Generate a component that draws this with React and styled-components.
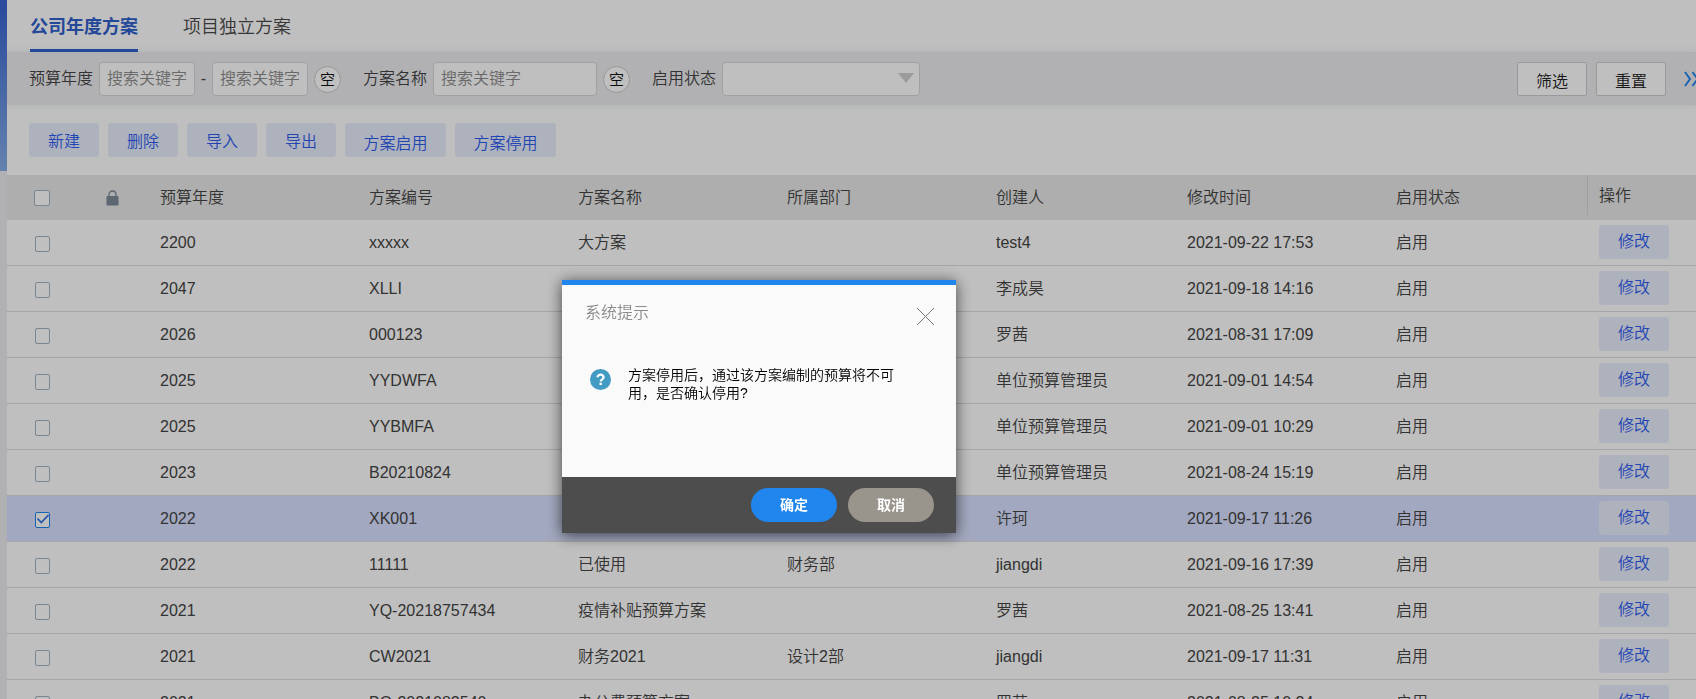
import React, { useState } from "react";
import styled, { createGlobalStyle } from 'styled-components';

const GlobalStyle = createGlobalStyle`
  * {
    box-sizing: border-box;
  }
  body {
    margin: 0;
    font-family: "Liberation Sans", "Noto Sans CJK SC", sans-serif;
    font-size: 16px;
    font-weight: 350;
    color: #444;
    background: #fff;
  }
  button, input, select {
    font: inherit;
    margin: 0;
  }
`;

const Page = styled.div`
  display: flex;
  height: 100vh;
  overflow: hidden;
`

const SideStrip = styled.div`
  flex: none;
  width: 7px;
  background: #ededf1;
  &::before {
    content: '';
    display: block;
    height: 171px;
    background: linear-gradient(#3663d1, #86aee8);
  }
`

const Main = styled.main`
  flex: 1;
  min-width: 0;
  overflow: hidden;
`

const Tabs = styled.nav`
  display: flex;
  gap: 45px;
  height: 52px;
  padding: 0 23px;
`

const Tab = styled.a`
  height: 52px;
  line-height: 54px;
  font-size: 18px;
  text-decoration: none;
  font-weight: ${(props) => (props.$active ? 'bold' : '350')};
  color: ${(props) => (props.$active ? '#3060cc' : '#4a4a4a')};
  border-bottom: 3px solid ${(props) => (props.$active ? '#3060cc' : 'transparent')};
`

const FilterBar = styled.form`
  display: flex;
  align-items: center;
  height: 53px;
  padding-left: 22px;
  background: #ededf1;
  box-shadow: 0 0 8px rgba(60, 90, 130, 0.12);
`

const FilterLabel = styled.label`
  flex: none;
  line-height: 34px;
  margin-right: 6px;
`

const TextInput = styled.input`
  flex: none;
  width: ${(props) => props.$width}px;
  height: 34px;
  padding: 0 7px;
  border: 1px solid #d7d7da;
  border-radius: 4px;
  background: #fff;
  &::placeholder {
    color: #8c8c8c;
    opacity: 1;
  }
`

const Dash = styled.span`
  flex: none;
  width: 17px;
  text-align: center;
`

const EmptyButton = styled.button`
  flex: none;
  width: 27px;
  height: 27px;
  margin: 2px 22px 0 6px;
  padding: 0;
  border: 1px solid #c8c8cc;
  border-radius: 50%;
  background: #fff;
  color: #111;
  font-size: 15px;
  line-height: 23px;
`

const SelectWrap = styled.div`
  position: relative;
  flex: none;
  width: 198px;
  height: 34px;
`

const Select = styled.select`
  width: 100%;
  height: 100%;
  padding: 0 24px 0 7px;
  border: 1px solid #d7d7da;
  border-radius: 4px;
  background: #fff;
  appearance: none;
`

const Caret = styled.svg`
  position: absolute;
  right: 6px;
  top: 11px;
  pointer-events: none;
`

const FilterActions = styled.div`
  display: flex;
  align-items: center;
  flex: none;
  gap: 9px;
  margin-left: auto;
`

const FilterButton = styled.button`
  width: 70px;
  height: 34px;
  padding: 2px 0 0;
  border: 1px solid #ccc;
  border-radius: 2px;
  background: #fff;
  color: #222;
`

const MoreButton = styled.button`
  display: flex;
  width: 16px;
  height: 16px;
  margin: 0 -4px 0 9px;
  padding: 0;
  border: 0;
  background: none;
`

const Toolbar = styled.div`
  display: flex;
  gap: 9px;
  padding: 18px 22px;
`

const ActionButton = styled.button`
  display: block;
  width: ${(props) => (props.$wide ? 101 : 70)}px;
  height: 34px;
  padding: ${(props) => (props.$wide ? '3px 0 0' : '0')};
  border: 0;
  border-radius: 3px;
  background: #e9eefd;
  color: #2f5df0;
`

const Table = styled.table`
  width: 100%;
  table-layout: fixed;
  border-collapse: separate;
  border-spacing: 0;
`

const HeadRow = styled.tr`
  height: 45px;
  background: #e8e8e8;
`

const HeadCell = styled.th`
  padding: ${(props) => (props.$icon ? '0' : '0 12px')};
  text-align: ${(props) => (props.$icon ? 'center' : 'left')};
  vertical-align: ${(props) => (props.$top ? 'top' : 'middle')};
  font-weight: 350;
  line-height: 24px;
  svg {
    display: block;
    margin: 0 auto;
  }
`

const OperateTitle = styled.div`
  height: 40px;
  margin: 0 -12px;
  padding-left: 11px;
  border-left: 1px solid #d4d4d4;
  line-height: 42px;
`

const Row = styled.tr`
  height: 46px;
  background: ${(props) => (props.$checked ? '#d9e1ff' : '#fff')};
`

const Cell = styled.td`
  padding: 0 12px;
  border-bottom: 1px solid #dcdcdc;
  line-height: 24px;
  white-space: nowrap;
`

const CheckCell = styled(Cell)`
  padding: 3px 0 0;
  text-align: center;
`

const OperateCell = styled(Cell)`
  padding-bottom: 1px;
`

const Checkbox = styled.input`
  display: block;
  width: ${(props) => (props.$head ? 16 : 15)}px;
  height: 16px;
  margin: 0 auto;
  appearance: none;
  border: 1px solid #a3b4c4;
  border-radius: 2px;
  background: #fff;
  &:checked {
    border-color: #2085ec;
    background: #fff url("data:image/svg+xml,%3Csvg xmlns='http://www.w3.org/2000/svg' viewBox='0 0 13 14'%3E%3Cpath d='M1.5 5.5L5.3 9.5L12.5 2' fill='none' stroke='%232f74e6' stroke-width='1.8'/%3E%3C/svg%3E") center / 100% 100%;
  }
`

const Mask = styled.div`
  position: fixed;
  inset: 0;
  background: rgba(0, 0, 0, 0.25);
`

const Dialog = styled.section`
  position: fixed;
  left: 562px;
  top: 280px;
  width: 394px;
  border-top: 5px solid #2085ec;
  background: #fafafa;
  box-shadow: 0 2px 14px rgba(0, 0, 0, 0.65);
`

const DialogHead = styled.header`
  display: flex;
  justify-content: space-between;
  padding: 16px 22px 0 23px;
`

const DialogTitle = styled.h2`
  margin: 0;
  font-size: 16px;
  font-weight: 350;
  line-height: 24px;
  color: #8c8c8c;
`

const CloseButton = styled.button`
  display: flex;
  padding: 7px 0 0;
  border: 0;
  background: none;
`

const DialogBody = styled.div`
  display: flex;
  gap: 17px;
  height: 152px;
  padding: 41px 60px 0 28px;
`

const HelpIcon = styled.svg`
  flex: none;
  margin-top: 3px;
`

const Message = styled.p`
  margin: 0;
  font-size: 14px;
  line-height: 18px;
  color: #000;
`

const DialogFoot = styled.footer`
  display: flex;
  justify-content: flex-end;
  gap: 11px;
  padding: 11px 22px;
  background: #4d4d4d;
`

const PillButton = styled.button`
  width: 86px;
  height: 34px;
  padding: 0 0 2px;
  border: 0;
  border-radius: 17px;
  background: ${(props) => (props.$primary ? '#2085ec' : '#99948c')};
  color: #fff;
  font-size: 14px;
  font-weight: bold;
`

const actions = ['新建', '删除', '导入', '导出', '方案启用', '方案停用'];

const columns = ['预算年度', '方案编号', '方案名称', '所属部门', '创建人', '修改时间', '启用状态'];

const plans = [
    { year: '2200', code: 'xxxxx', name: '大方案', dept: '', creator: 'test4', time: '2021-09-22 17:53' },
    { year: '2047', code: 'XLLI', name: '', dept: '', creator: '李成昊', time: '2021-09-18 14:16' },
    { year: '2026', code: '000123', name: '', dept: '', creator: '罗茜', time: '2021-08-31 17:09' },
    { year: '2025', code: 'YYDWFA', name: '', dept: '', creator: '单位预算管理员', time: '2021-09-01 14:54' },
    { year: '2025', code: 'YYBMFA', name: '', dept: '', creator: '单位预算管理员', time: '2021-09-01 10:29' },
    { year: '2023', code: 'B20210824', name: '', dept: '', creator: '单位预算管理员', time: '2021-08-24 15:19' },
    { year: '2022', code: 'XK001', name: '', dept: '', creator: '许珂', time: '2021-09-17 11:26' },
    { year: '2022', code: '11111', name: '已使用', dept: '财务部', creator: 'jiangdi', time: '2021-09-16 17:39' },
    { year: '2021', code: 'YQ-20218757434', name: '疫情补贴预算方案', dept: '', creator: '罗茜', time: '2021-08-25 13:41' },
    { year: '2021', code: 'CW2021', name: '财务2021', dept: '设计2部', creator: 'jiangdi', time: '2021-09-17 11:31' },
    { year: '2021', code: 'BQ-2021082540', name: '办公费预算方案', dept: '', creator: '罗茜', time: '2021-08-25 10:24' },
];

function LockIcon() {
    return (
        <svg width="13" height="16" viewBox="0 0 13 16">
            <path d="M3 8V4.3a3.5 3.3 0 0 1 7 0V8" fill="none" stroke="#7c8a99" strokeWidth="1.3" />
            <rect x="0.5" y="6" width="12" height="9.5" rx="1" fill="#7c8a99" />
        </svg>
    );
}

export default function BudgetPlan() {
    const [checked, setChecked] = useState([6]);
    const [open, setOpen] = useState(true);

    const toggle = (index) => {
        if (checked.includes(index)) {
            setChecked(checked.filter((item) => item !== index));
        } else {
            setChecked([...checked, index]);
        }
    }

    const toggleAll = (e) => {
        setChecked(e.target.checked ? plans.map((plan, index) => index) : []);
    }

    return (
        <Page>
            <GlobalStyle />
            <SideStrip />
            <Main>
                <Tabs>
                    <Tab href="#company" $active>公司年度方案</Tab>
                    <Tab href="#project">项目独立方案</Tab>
                </Tabs>
                <FilterBar onSubmit={(e) => e.preventDefault()}>
                    <FilterLabel htmlFor="yearFrom">预算年度</FilterLabel>
                    <TextInput id="yearFrom" $width={96} placeholder="搜索关键字" />
                    <Dash>-</Dash>
                    <TextInput aria-label="预算年度" $width={96} placeholder="搜索关键字" />
                    <EmptyButton type="button">空</EmptyButton>
                    <FilterLabel htmlFor="planName">方案名称</FilterLabel>
                    <TextInput id="planName" $width={164} placeholder="搜索关键字" />
                    <EmptyButton type="button">空</EmptyButton>
                    <FilterLabel htmlFor="status">启用状态</FilterLabel>
                    <SelectWrap>
                        <Select id="status" defaultValue="">
                            <option value=""></option>
                        </Select>
                        <Caret width="16" height="10" viewBox="0 0 16 10">
                            <path d="M0 0h16L8 10z" fill="#cfcfcf" />
                        </Caret>
                    </SelectWrap>
                    <FilterActions>
                        <FilterButton type="submit">筛选</FilterButton>
                        <FilterButton type="reset">重置</FilterButton>
                        <MoreButton type="button" aria-label="更多">
                            <svg width="16" height="16" viewBox="0 0 16 16">
                                <path d="M1 1l5 7-5 7M8.5 1l5 7-5 7" fill="none" stroke="#2085ec" strokeWidth="2" />
                            </svg>
                        </MoreButton>
                    </FilterActions>
                </FilterBar>
                <Toolbar>
                    {actions.map((action) => (
                        <ActionButton key={action} $wide={action.length > 2}>{action}</ActionButton>
                    ))}
                </Toolbar>
                <Table>
                    <colgroup>
                        <col width="70" />
                        <col width="71" />
                        <col />
                        <col />
                        <col />
                        <col />
                        <col width="191" />
                        <col />
                        <col width="203" />
                        <col width="109" />
                    </colgroup>
                    <thead>
                        <HeadRow>
                            <HeadCell $icon>
                                <Checkbox
                                    $head
                                    type="checkbox"
                                    aria-label="全选"
                                    checked={checked.length === plans.length}
                                    onChange={toggleAll}
                                />
                            </HeadCell>
                            <HeadCell $icon><LockIcon /></HeadCell>
                            {columns.map((column) => (
                                <HeadCell key={column}>{column}</HeadCell>
                            ))}
                            <HeadCell $top>
                                <OperateTitle>操作</OperateTitle>
                            </HeadCell>
                        </HeadRow>
                    </thead>
                    <tbody>
                        {plans.map((plan, index) => (
                            <Row key={index} $checked={checked.includes(index)}>
                                <CheckCell>
                                    <Checkbox
                                        type="checkbox"
                                        aria-label={plan.code}
                                        checked={checked.includes(index)}
                                        onChange={() => toggle(index)}
                                    />
                                </CheckCell>
                                <Cell />
                                <Cell>{plan.year}</Cell>
                                <Cell>{plan.code}</Cell>
                                <Cell>{plan.name}</Cell>
                                <Cell>{plan.dept}</Cell>
                                <Cell>{plan.creator}</Cell>
                                <Cell>{plan.time}</Cell>
                                <Cell>启用</Cell>
                                <OperateCell>
                                    <ActionButton>修改</ActionButton>
                                </OperateCell>
                            </Row>
                        ))}
                    </tbody>
                </Table>
            </Main>
            {open && (
                <>
                    <Mask />
                    <Dialog role="dialog" aria-labelledby="dialogTitle">
                        <DialogHead>
                            <DialogTitle id="dialogTitle">系统提示</DialogTitle>
                            <CloseButton aria-label="关闭" onClick={() => setOpen(false)}>
                                <svg width="17" height="17" viewBox="0 0 17 17">
                                    <path d="M0 0l17 17M17 0L0 17" stroke="#777" strokeWidth="1" />
                                </svg>
                            </CloseButton>
                        </DialogHead>
                        <DialogBody>
                            <HelpIcon width="21" height="21" viewBox="0 0 21 21">
                                <circle cx="10.5" cy="10.5" r="10.5" fill="#429bc2" />
                                <path d="M7.6 8.3c0-3.6 6-3.6 6 0 0 2-2.9 2-2.9 4.2" fill="none" stroke="#fff" strokeWidth="2.2" />
                                <rect x="9.5" y="13.7" width="2.4" height="2.3" fill="#fff" />
                            </HelpIcon>
                            <Message>方案停用后，通过该方案编制的预算将不可用，是否确认停用?</Message>
                        </DialogBody>
                        <DialogFoot>
                            <PillButton $primary onClick={() => setOpen(false)}>确定</PillButton>
                            <PillButton onClick={() => setOpen(false)}>取消</PillButton>
                        </DialogFoot>
                    </Dialog>
                </>
            )}
        </Page>
    );
}
